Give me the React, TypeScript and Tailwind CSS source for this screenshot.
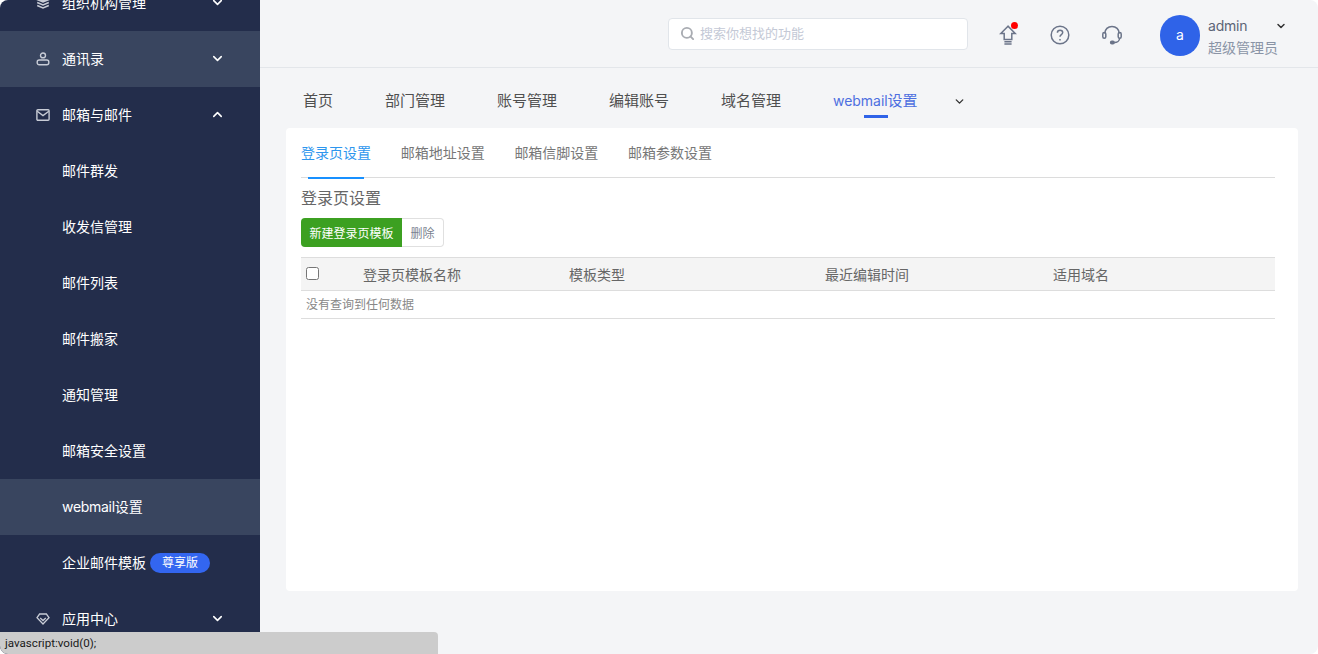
import { ChevronDown, ChevronUp, Search } from "lucide-react";

const subItems = ["邮件群发", "收发信管理", "邮件列表", "邮件搬家", "通知管理", "邮箱安全设置"];
const topTabs = ["首页", "部门管理", "账号管理", "编辑账号", "域名管理"];
const cardTabs = ["邮箱地址设置", "邮箱信脚设置", "邮箱参数设置"];

// Sidebar glyphs, drawn to match the reference strokes
const StackIcon = () => (
  <svg width="14" height="14" viewBox="0 0 14 14" fill="none" stroke="currentColor" strokeWidth="1.5">
    <path d="M7 1 13 3.5 7 6 1 3.5 7 1Z" fill="currentColor" />
    <path d="M1.2 6.5 7 9l5.8-2.5M1.2 9.5 7 12l5.8-2.5" />
  </svg>
);
const PersonIcon = () => (
  <svg width="14" height="14" viewBox="0 0 14 14" fill="none" stroke="currentColor" strokeWidth="1.4">
    <ellipse cx="7" cy="3.4" rx="2.5" ry="2.4" />
    <rect x="1.2" y="8" width="11.6" height="4.8" rx="2" />
  </svg>
);
const MailIcon = () => (
  <svg width="14" height="14" viewBox="0 0 14 14" fill="none" stroke="currentColor" strokeWidth="1.4">
    <rect x="0.9" y="1.7" width="12.2" height="10.6" rx="1" />
    <path d="M1.2 3.2 7 7.6l5.8-4.4" />
  </svg>
);
const GemIcon = () => (
  <svg width="14" height="12" viewBox="0 0 14 12" fill="none" stroke="currentColor" strokeWidth="1.3">
    <path d="M3.6 1h6.8L13 4.6 7 11 1 4.6 3.6 1Z" />
    <path d="M4.2 5 7 7.6 9.8 5" />
  </svg>
);

function NavGroup({ label, icon, open, active }: { label: string; icon: React.ReactNode; open?: boolean; active?: boolean }) {
  return (
    <div className={`flex h-14 items-center pl-[36px] pr-[35px] text-white ${active ? "bg-[#39455f]" : ""}`}>
      <span className="flex w-[26px] text-[#c8ccd6]">{icon}</span>
      <span className="flex-1 text-sm">{label}</span>
      {open ? <ChevronUp size={15} strokeWidth={2.5} className="-mt-0.5" /> : <ChevronDown size={15} strokeWidth={2.5} className="-mt-0.5" />}
    </div>
  );
}

function Sidebar() {
  return (
    <aside className="h-full w-[260px] shrink-0 overflow-hidden bg-[#232d4b]">
      <div className="-mt-[25px]">
        <NavGroup label="组织机构管理" icon={<StackIcon />} />
        <NavGroup label="通讯录" icon={<PersonIcon />} active />
        <NavGroup label="邮箱与邮件" icon={<MailIcon />} open />
        {subItems.map((item) => (
          <div key={item} className="flex h-14 items-center pl-[62px] text-sm text-white">{item}</div>
        ))}
        <div className="flex h-14 items-center bg-[#39455f] pl-[62px] text-sm text-white">
          <span className="tracking-[-0.3px]">webmail</span>设置
        </div>
        <div className="flex h-14 items-center pl-[62px] text-sm text-white">
          企业邮件模板
          <span className="ml-1 flex h-5 w-[60px] items-center justify-center rounded-full bg-[#3366f0] text-xs">尊享版</span>
        </div>
        <NavGroup label="应用中心" icon={<GemIcon />} />
      </div>
    </aside>
  );
}

function Header() {
  return (
    <header className="flex h-[68px] shrink-0 items-center border-b border-[#e3e6ea]">
      <div className="ml-[408px] flex h-8 w-[300px] items-center gap-[5px] rounded border border-[#e1e5ea] bg-white pl-[11px] text-[13px] text-[#c4c9d6]">
        <Search size={15} strokeWidth={3} className="text-[#a9acb2]" />
        搜索你想找的功能
      </div>
      <div className="relative mt-[3px] ml-[31px] text-[#6b7489]">
        <svg className="block" width="18" height="20" viewBox="0 0 18 20" fill="none" stroke="currentColor" strokeWidth="1.5">
          <path d="M9 1.2 1.8 8.6h3.4v6h7.6v-6h3.4L9 1.2Z" />
          <path d="M5.4 16.8h7.2M5.4 19h7.2" />
        </svg>
        <span className="absolute -top-[3px] -right-[1px] h-[7px] w-[7px] rounded-full bg-[#f00]" />
      </div>
      <svg className="mt-[2px] ml-[33px] block text-[#6b7489]" width="20" height="20" viewBox="0 0 20 20" fill="none" stroke="currentColor" strokeWidth="1.5">
        <circle cx="10" cy="10" r="8.8" />
        <path d="M7.4 7.8c0-1.5 1.2-2.5 2.7-2.5s2.6 1 2.6 2.3c0 2-2.7 2.1-2.7 4.2" />
        <path d="M10 14v1.4" />
      </svg>
      <svg className="mt-[2px] ml-[32px] block text-[#6b7489]" width="20" height="20" viewBox="0 0 20 20" fill="none" stroke="currentColor" strokeWidth="1.5">
        <path d="M2.8 8.5C2.8 4.2 6 1.4 10 1.4s7.2 2.8 7.2 7.1" />
        <rect x="0.8" y="7.6" width="3" height="5.6" rx="1.5" />
        <rect x="16.2" y="7.6" width="3" height="5.6" rx="1.5" />
        <path d="M17.6 13.2c0 2.8-2.6 4.3-5.2 4.3" />
        <rect x="8.6" y="16.2" width="3.6" height="2.6" rx="1.3" fill="currentColor" />
      </svg>
      <div className="mt-[3px] ml-[38px] flex h-[41px] w-10 items-center justify-center rounded-full bg-[#2f63e8] text-sm text-white">a</div>
      <div className="mt-[6px] ml-2 w-[79px]">
        <div className="flex items-center justify-between text-sm leading-[22px] text-[#5c6476]">
          <span className="tracking-[-0.2px]">admin</span>
          <ChevronDown size={12} strokeWidth={3} className="text-[#333]" />
        </div>
        <div className="text-sm leading-[22px] text-[#8a94a6]">超级管理员</div>
      </div>
    </header>
  );
}

function TopTabs() {
  return (
    <nav className="flex h-[60px] shrink-0 items-center gap-[52px] pt-1.5 pl-[43px] text-[15px] text-[#4f4f4f]">
      {topTabs.map((tab) => (
        <span key={tab}>{tab}</span>
      ))}
      <span className="relative text-[#4d6fe0]">
        <span className="text-sm tracking-[-0.05px]">webmail</span>设置
        <span className="absolute -bottom-[6px] left-[31px] h-[3px] w-6 bg-[#2f63e8]" />
      </span>
      <ChevronDown size={13} strokeWidth={2.5} className="-ml-[17px] text-[#333]" />
    </nav>
  );
}

function Card() {
  return (
    <section className="ml-[26px] mr-5 h-[463px] rounded bg-white pr-[23px] pl-[15px]">
      <div className="flex h-[50px] gap-[29.7px] border-b border-[#dcdcdc] text-sm text-[#777]">
        <span className="relative flex h-[50px] items-center text-[#2d96ee]">
          登录页设置
          <span className="absolute bottom-[-1px] left-[7px] h-[2px] w-[56px] bg-[#1890ff]" />
        </span>
        {cardTabs.map((tab) => (
          <span key={tab} className="flex h-[50px] items-center">{tab}</span>
        ))}
      </div>
      <h2 className="mt-[9px] text-base leading-[22px] font-normal text-[#666]">登录页设置</h2>
      <div className="mt-[9px] flex h-[29px] text-xs">
        <button className="w-[101px] rounded-l bg-[#3ca021] pt-0.5 text-white">新建登录页模板</button>
        <button className="w-[42px] rounded-r border border-l-0 border-[#e0e0e0] bg-white pt-0.5 text-[#7a8290]">删除</button>
      </div>
      <div className="mt-[10px] flex h-[34px] items-center border-y border-[#dddddd] bg-[#f4f4f4] text-sm text-[#666]">
        <input type="checkbox" className="-mt-0.5 ml-[5px] h-[13px] w-[13px]" />
        <span className="mt-0.5 ml-[44px] w-[206px]">登录页模板名称</span>
        <span className="mt-0.5 w-[256px]">模板类型</span>
        <span className="mt-0.5 w-[228px]">最近编辑时间</span>
        <span className="mt-0.5">适用域名</span>
      </div>
      <div className="flex h-[28px] items-center border-b border-[#dddddd] pl-[5px] text-xs text-[#888]">没有查询到任何数据</div>
    </section>
  );
}

export default function App() {
  return (
    <div className="h-[654px] w-[1318px] bg-white">
      <div className="relative flex h-full w-full overflow-hidden rounded-lg bg-[#f4f5f7] font-['Inter','Noto_Sans_CJK_SC',sans-serif]">
        <Sidebar />
        <main className="flex min-w-0 flex-1 flex-col">
          <Header />
          <TopTabs />
          <Card />
        </main>
        <div className="absolute bottom-0 left-0 flex h-[22px] w-[438px] items-center rounded-tr bg-[#cccccc] pt-0.5 pl-[5px] font-['Roboto',sans-serif] text-[11.6px] text-[#1a1a1a]">javascript:void(0);</div>
      </div>
    </div>
  );
}
